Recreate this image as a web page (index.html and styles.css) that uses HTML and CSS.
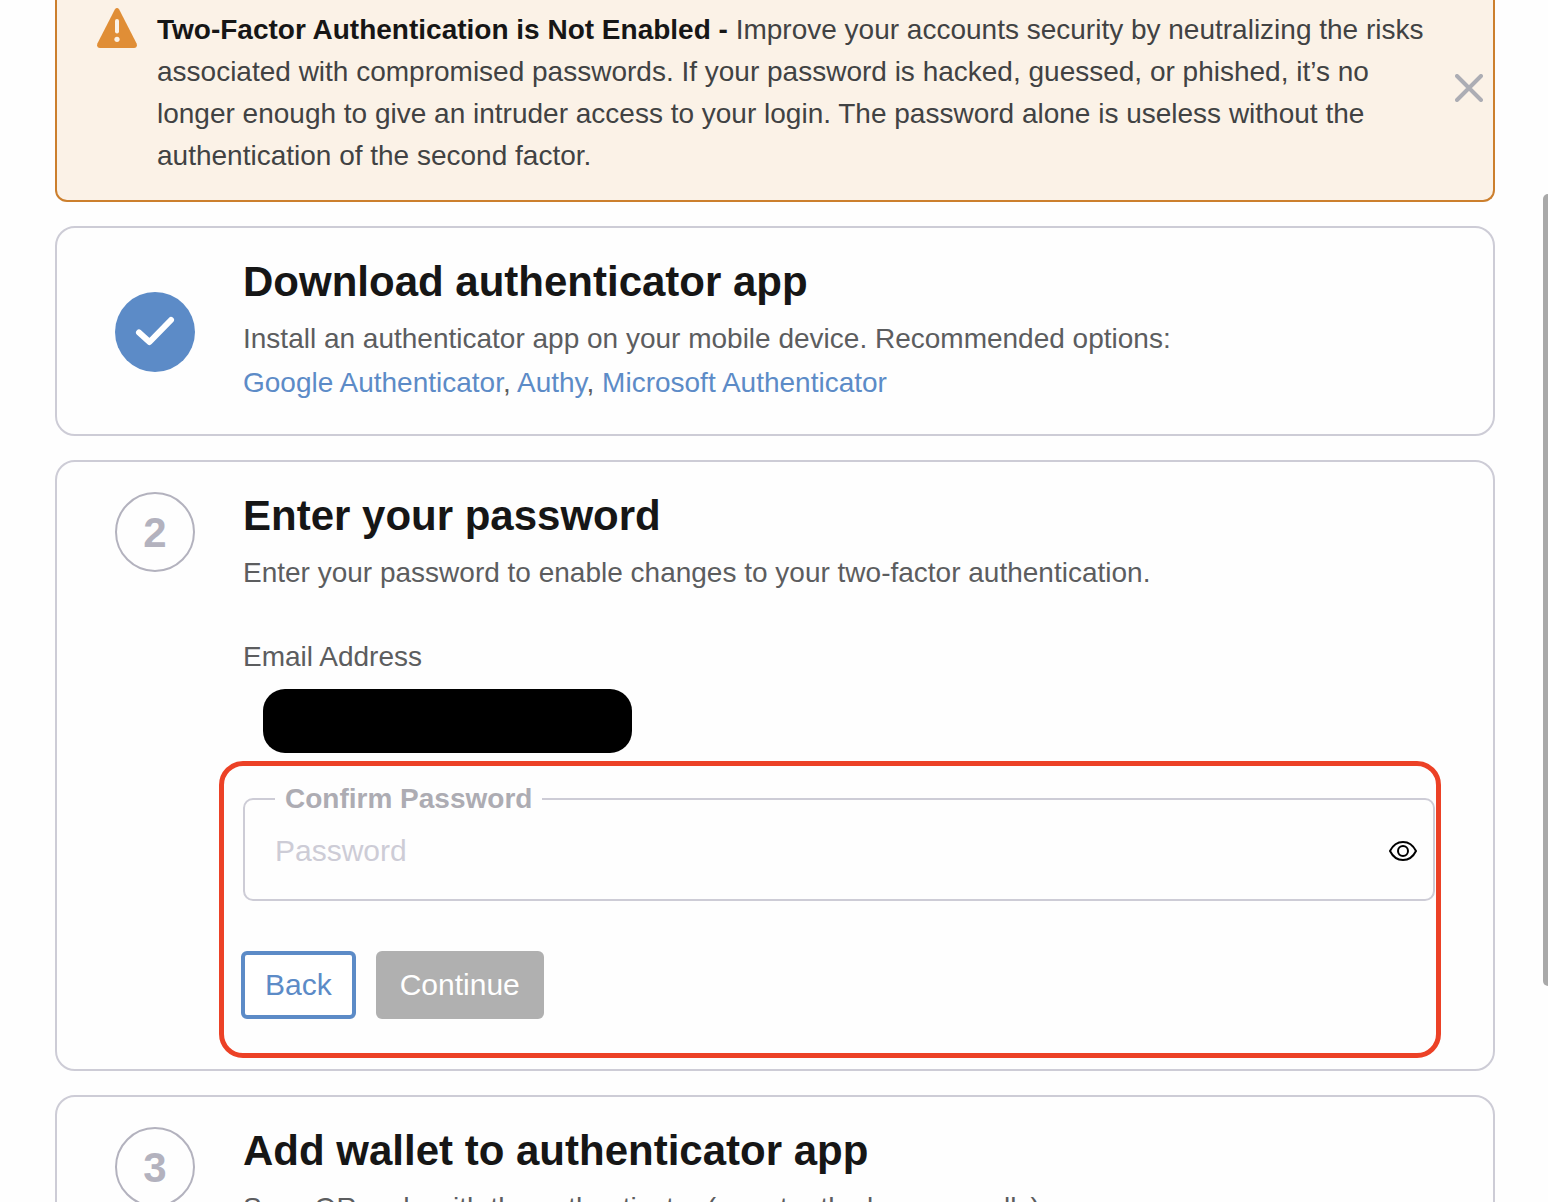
FILE: index.html
```html
<!DOCTYPE html>
<html lang="en">
<head>
    <meta charset="UTF-8">
    <meta name="viewport" content="width=device-width, initial-scale=1.0">
    <title>Two-Factor Authentication</title>
    <link rel="stylesheet" href="styles.css">
</head>
<body>
    <main class="page">
        <div class="banner" role="alert">
            <svg class="banner-icon" viewBox="0 0 40 40" aria-hidden="true">
                <path d="M17.8 1.4Q20 -1.2 22.200 1.400L39.600 35.500Q40.800 39.500 37 40H3Q-0.800 39.500 0.400 35.500Z" fill="#e08e36"/>
                <path d="M20 13v10.500" stroke="#fbf2e7" stroke-width="4" stroke-linecap="round"/>
                <circle cx="20" cy="31.300" r="2.600" fill="#fbf2e7"/>
            </svg>
            <p class="banner-text"><strong>Two-Factor Authentication is Not Enabled -</strong> Improve your accounts security by neutralizing the risks associated with compromised passwords. If your password is hacked, guessed, or phished, it’s no longer enough to give an intruder access to your login. The password alone is useless without the authentication of the second factor.</p>
            <button type="button" class="banner-close" aria-label="Close">
                <svg viewBox="0 0 28 28" width="28" height="28">
                    <path d="M2 2L26 26M26 2L2 26" stroke="#acadb4" stroke-width="4" stroke-linecap="round"/>
                </svg>
            </button>
        </div>

        <section class="card card-done">
            <div class="step step-done">
                <svg viewBox="0 0 80 80" width="80" height="80" aria-hidden="true">
                    <path d="M24 40.500L34.500 50L56 28" fill="none" stroke="#fff" stroke-width="6" stroke-linecap="round" stroke-linejoin="round"/>
                </svg>
            </div>
            <div class="card-body">
                <h2>Download authenticator app</h2>
                <p>Install an authenticator app on your mobile device. Recommended options:</p>
                <p><a href="#">Google Authenticator</a>, <a href="#">Authy</a>, <a href="#">Microsoft Authenticator</a></p>
            </div>
        </section>

        <section class="card">
            <div class="step">2</div>
            <div class="card-body">
                <h2>Enter your password</h2>
                <p>Enter your password to enable changes to your two-factor authentication.</p>
                <p class="email-label">Email Address</p>
                <div class="email-hidden"></div>

                <form class="password-form">
                    <fieldset class="field">
                        <legend><label for="password">Confirm Password</label></legend>
                        <input type="password" id="password" placeholder="Password">
                        <button type="button" class="show-password" aria-label="Show password">
                            <svg viewBox="0 0 28 20" width="28" height="20">
                                <path d="M1 10C4 4 9 1 14 1S24 4 27 10C24 16 19 19 14 19S4 16 1 10Z" fill="none" stroke="#000" stroke-width="2" stroke-linejoin="round"/>
                                <circle cx="14" cy="10" r="5" fill="none" stroke="#000" stroke-width="2"/>
                            </svg>
                        </button>
                    </fieldset>
                    <div class="buttons">
                        <button type="button" class="btn btn-back">Back</button>
                        <button type="submit" class="btn btn-continue" disabled>Continue</button>
                    </div>
                </form>
            </div>
        </section>

        <section class="card">
            <div class="step">3</div>
            <div class="card-body">
                <h2>Add wallet to authenticator app</h2>
                <p>Scan QR code with the authenticator (or enter the key manually)</p>
            </div>
        </section>
    </main>
    <div class="scroll-thumb"></div>
</body>
</html>
```
FILE: styles.css
```css
* {
    box-sizing: border-box;
}

body {
    height: 100vh;
    margin: 0;
    overflow: hidden;
    background-color: #fefefe;
    color: #5c5d5f;
    font-family: "Liberation Sans", Arial, sans-serif;
    font-size: 28px;
    line-height: 44px;
}

h2, p {
    margin: 0;
}

a {
    color: #5c8bc7;
    text-decoration: none;
}

button {
    font-family: inherit;
    cursor: pointer;
}

.page {
    display: flex;
    flex-direction: column;
    gap: 24px;
    padding: 0 53px 24px 55px;
}

/* warning banner */
.banner {
    display: flex;
    align-items: center;
    padding: 8px 10px 22px 40px;
    background-color: #fbf2e7;
    border: 2px solid #cc7f2d;
    border-top: none;
    border-radius: 0 0 12px 12px;
}

.banner-icon {
    flex: none;
    align-self: flex-start;
    width: 40px;
    height: 40px;
    margin-right: 20px;
}

.banner-text {
    flex: 1;
    margin-right: 20px;
    padding: 1px 0;
    color: #414243;
    line-height: 42px;
}

.banner-text strong {
    color: #161616;
}

.banner-close {
    padding: 0 0 10px;
    background: none;
    border: none;
}

.banner-close svg,
.show-password svg {
    display: block;
}

/* step cards */
.card {
    display: flex;
    align-items: flex-start;
    gap: 48px;
    padding: 30px 58px 29px;
    border: 2px solid #cdccd6;
    border-radius: 20px;
}

.card-done {
    align-items: center;
}

.card-body {
    flex: 1;
    min-width: 0;
}

.card h2 {
    margin-bottom: 11px;
    color: #161616;
    font-size: 42px;
    line-height: 48px;
}

.step {
    flex: none;
    width: 80px;
    height: 80px;
    border: 2px solid #b3b2be;
    border-radius: 50%;
    color: #b3b2be;
    font-size: 42px;
    font-weight: bold;
    line-height: 78px;
    text-align: center;
}

.step-done {
    border: none;
    background-color: #5c8bc7;
}

/* password form */
.email-label {
    margin-top: 40px;
}

.email-hidden {
    width: 369px;
    max-width: 100%;
    height: 64px;
    margin: 10px 0 29px 20px;
    background-color: #000;
    border-radius: 22px;
}

.password-form {
    position: relative;
    margin-bottom: 21px;
}

.password-form::after {
    content: "";
    position: absolute;
    inset: -21px -6px -39px -24px;
    border: 5px solid #ec4126;
    border-radius: 24px;
    pointer-events: none;
}

.field {
    display: flex;
    align-items: center;
    margin: 0 0 50px;
    padding: 0 16px 0 30px;
    border: 2px solid #cdccd6;
    border-radius: 10px;
}

.field legend {
    padding: 0 10px;
    color: #adacb3;
    font-weight: bold;
    line-height: 34px;
}

.field input {
    flex: 1;
    min-width: 0;
    height: 69px;
    margin-bottom: 14px;
    padding: 0;
    background: none;
    border: none;
    outline: none;
    color: #161616;
    font-family: inherit;
    font-size: 30px;
}

.field input::placeholder {
    color: #cdccd6;
}

.show-password {
    margin-bottom: 14px;
    padding: 0;
    background: none;
    border: none;
}

.buttons {
    display: flex;
    gap: 20px;
    margin-left: -2px;
}

.btn {
    height: 68px;
    padding: 0 24px;
    border: none;
    border-radius: 6px;
    font-size: 30px;
}

.btn-back {
    padding: 0 20px;
    background-color: #fff;
    border: 4px solid #5c8bc7;
    color: #5c8bc7;
}

.btn-continue {
    background-color: #b0b0b0;
    color: #fff;
}

/* page scroll indicator */
.scroll-thumb {
    position: fixed;
    top: 194px;
    right: 0;
    width: 5px;
    height: 792px;
    background-color: #a9a9a9;
    border-radius: 5px 0 0 5px;
}
```
